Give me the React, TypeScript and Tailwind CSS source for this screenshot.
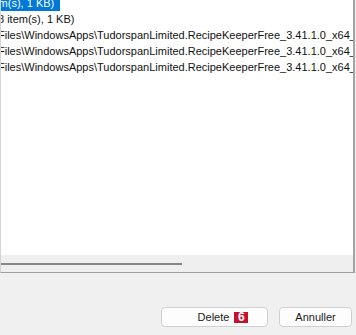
import React from "react";

const pathText = "Files\\WindowsApps\\TudorspanLimited.RecipeKeeperFree_3.41.1.0_x64__8wekyb3d8bbwe";

export default function App() {
  return (
    <div
      className="w-[356px] h-[335px] bg-[#f0f0f0] overflow-hidden flex flex-col"
      style={{ fontFamily: "Tahoma, 'Liberation Sans', Arial, sans-serif" }}
    >
      <div className="w-[355px] h-[273px] border-l border-[#d4d4d4] border-r-2 border-r-[#a3a3a3] border-b border-b-[#a0a0a0] flex flex-col">
        <div className="h-[255px] bg-white overflow-hidden text-[11px] leading-[16px] text-[#111]">
          <div className="whitespace-nowrap -mt-[5px]">
            <div className="h-[16px] ml-[-14px]">
              <span className="bg-[#0078d7] text-white pr-[6px] pt-[2px] pb-[2px]">item(s), 1 KB)</span>
            </div>
            <div className="h-[16px] ml-[-3px]">8 item(s), 1 KB)</div>
            <div className="h-[16px] ml-[-3px]">{pathText}</div>
            <div className="h-[16px] ml-[-3px]">{pathText}</div>
            <div className="h-[16px] ml-[-3px]">{pathText}</div>
          </div>
        </div>
        <div className="flex-1 bg-[#efefef] flex items-center">
          <div className="w-[181px] h-[2px] bg-[#858585]" />
        </div>
      </div>
      <div className="flex justify-end gap-[11px] pr-[4px] mt-[34px]">
        <button className="w-[107px] h-[20px] bg-[#fdfdfd] border border-[#d0d0d0] rounded-[4px] flex items-center justify-center gap-[5px] text-[11px] text-[#1a1a1a] pl-[17px]">
          <span>Delete</span>
          <span className="bg-[#c8102e] text-white font-bold text-[12px] leading-[11px] w-[14px] h-[11px] flex items-center justify-center">6</span>
        </button>
        <button className="w-[73px] h-[20px] bg-[#fdfdfd] border border-[#d0d0d0] rounded-[4px] flex items-center justify-center text-[11px] text-[#1a1a1a]">
          Annuller
        </button>
      </div>
    </div>
  );
}
